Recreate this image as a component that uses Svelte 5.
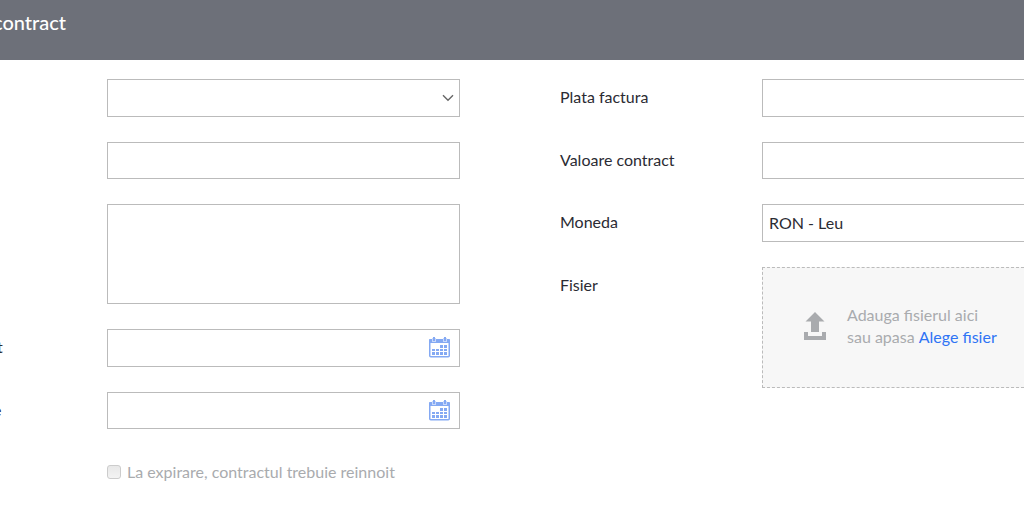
<script>
  let fileInput;
</script>

{#snippet chevron()}
  <svg class="chevron" width="12" height="8" viewBox="0 0 12 8" aria-hidden="true">
    <path d="M1 1.2 6 6.2 11 1.2" fill="none" stroke="#666" stroke-width="1.4" />
  </svg>
{/snippet}

{#snippet calendar()}
  <svg width="21" height="21" viewBox="0 0 21 21" aria-hidden="true">
    <rect x="0.75" y="2.75" width="19.5" height="17" rx="1" fill="#fff" stroke="#84a9f3" stroke-width="1.5" />
    <path d="M0 3a1 1 0 0 1 1-1h19a1 1 0 0 1 1 1v3H0z" fill="#84a9f3" />
    <path d="M3 1h4v4H3zM14 1h4v4h-4z" fill="#c8d8fa" />
    <path d="M4 0h2v4H4zM15 0h2v4h-2z" fill="#84a9f3" />
    <path
      d="M11 8h3v3h-3zM15 8h3v3h-3zM3 12h3v2H3zM7 12h3v2H7zM11 12h3v2h-3zM15 12h3v2h-3zM3 15h3v3H3zM7 15h3v3H7zM11 15h3v3h-3zM15 15h3v3h-3z"
      fill="#84a9f3"
    />
  </svg>
{/snippet}

<header><h1>contract</h1></header>

<form>
  <div class="column">
    <div class="row">
      <span></span>
      <div class="field">
        <select aria-label="Tip contract"><option></option></select>
        {@render chevron()}
      </div>
    </div>
    <div class="row">
      <span></span>
      <input class="box short" type="text" aria-label="Numar" />
    </div>
    <div class="row">
      <span></span>
      <textarea class="box" aria-label="Descriere"></textarea>
    </div>
    <div class="row">
      <label class="start" for="start">t</label>
      <div class="field">
        <input class="box" id="start" type="text" />
        <button class="pick" type="button" aria-label="Calendar">{@render calendar()}</button>
      </div>
    </div>
    <div class="row">
      <label class="end" for="end">e</label>
      <div class="field">
        <input class="box short" id="end" type="text" />
        <button class="pick" type="button" aria-label="Calendar">{@render calendar()}</button>
      </div>
    </div>
    <div class="row">
      <span></span>
      <label class="check">
        <input type="checkbox" disabled />
        La expirare, contractul trebuie reinnoit
      </label>
    </div>
  </div>

  <div class="column right">
    <div class="row">
      <label for="plata">Plata factura</label>
      <select id="plata"><option></option></select>
    </div>
    <div class="row">
      <label for="valoare">Valoare contract</label>
      <input class="box short" id="valoare" type="text" />
    </div>
    <div class="row">
      <label for="moneda">Moneda</label>
      <select id="moneda"><option>RON - Leu</option></select>
    </div>
    <div class="row">
      <label for="fisier">Fisier</label>
      <div class="drop">
        <svg width="22" height="28" viewBox="0 0 22 28" aria-hidden="true">
          <path d="M11 0 20.5 9.5H15V20H7V9.5H1.5z" fill="#a9abae" />
          <path d="M0 20h4v4h14v-4h4v8H0z" fill="#a9abae" />
        </svg>
        <p>
          Adauga fisierul aici<br />
          sau apasa <button type="button" onclick={() => fileInput.click()}>Alege fisier</button>
        </p>
        <input id="fisier" type="file" hidden bind:this={fileInput} />
      </div>
    </div>
  </div>
</form>

<style>
  :global(body) {
    background: #fff;
    color: #2b2b33;
    font: 16px/22px Lato, sans-serif;
    overflow-x: hidden;
  }

  header {
    height: 60px;
    background: #6d7079;
    color: #fff;
    overflow: hidden;
  }

  h1 {
    margin: 0;
    padding-top: 10px;
    font-size: 20px;
    line-height: 24px;
    font-weight: 500;
    text-indent: -7px;
  }

  form {
    display: grid;
    grid-template-columns: minmax(0, 460fr) minmax(0, 464fr);
    column-gap: 100px;
    padding-top: 19px;
  }

  .column {
    display: flex;
    flex-direction: column;
    gap: 25px;
  }

  .row {
    display: grid;
    grid-template-columns: 107px minmax(0, 1fr);
    line-height: 36px;
  }

  .right .row {
    grid-template-columns: 202px minmax(0, 1fr);
  }

  .field {
    position: relative;
  }

  .box,
  select {
    display: block;
    box-sizing: border-box;
    width: 100%;
    height: 38px;
    margin: 0;
    padding: 0 6px 3px;
    border: 1px solid #bbb;
    border-radius: 0;
    background: #fff;
    color: inherit;
    font: inherit;
    appearance: none;
    resize: none;
  }

  .box.short {
    height: 37px;
  }

  textarea.box {
    height: 100px;
  }

  .right .box,
  .right select {
    border-right: 0;
  }

  .chevron {
    position: absolute;
    right: 6px;
    top: 15px;
    pointer-events: none;
  }

  .pick {
    position: absolute;
    right: 10px;
    top: 8px;
    display: flex;
    padding: 0;
    border: 0;
    background: none;
  }

  .start {
    text-indent: -3px;
  }

  .end {
    text-indent: -7px;
  }

  .start,
  .end {
    overflow: hidden;
  }

  .check {
    display: flex;
    align-items: center;
    gap: 6px;
    color: #a9abae;
  }

  .check input {
    appearance: none;
    box-sizing: border-box;
    width: 14px;
    height: 14px;
    margin: 0;
    border: 1px solid #ccc;
    border-radius: 3px;
    background: linear-gradient(#e8e8e8, #f3f3f3);
  }

  .drop {
    box-sizing: border-box;
    height: 121px;
    display: flex;
    align-items: center;
    gap: 21px;
    padding: 0 0 3px 41px;
    border: 1px dashed #bbb;
    border-right: 0;
    background: #f7f7f7;
    color: #a9abae;
    line-height: 22px;
  }

  .drop p {
    margin: 0;
    white-space: nowrap;
  }

  .drop button {
    padding: 0;
    border: 0;
    background: none;
    color: #2f74f5;
    font: inherit;
    cursor: pointer;
  }
</style>
